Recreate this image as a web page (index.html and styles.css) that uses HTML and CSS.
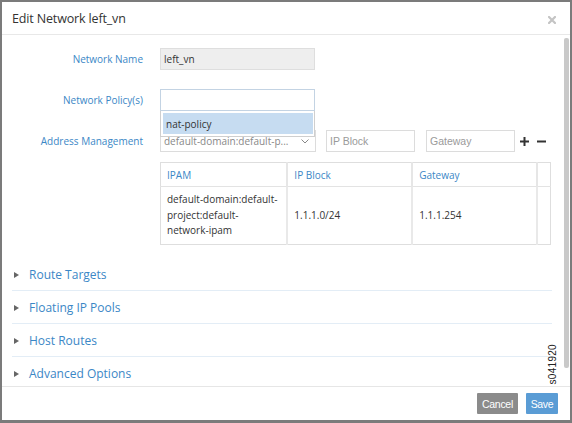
FILE: index.html
```html
<!DOCTYPE html>
<html>
<head>
<meta charset="utf-8">
<link rel="stylesheet" href="styles.css">
</head>
<body>
<div class="modal">
  <div class="modal-header">
    <h1 class="title">Edit Network left_vn</h1>
    <span class="close"><svg width="8" height="8" viewBox="0 0 8 8"><path d="M1 1L7 7M7 1L1 7" stroke="#c4c4c4" stroke-width="2.2" stroke-linecap="square"/></svg></span>
  </div>
  <div class="modal-body">
    <div class="form">
      <div class="row">
        <div class="label">Network Name</div>
        <div class="field"><div class="input readonly">left_vn</div></div>
      </div>
      <div class="row">
        <div class="label">Network Policy(s)</div>
        <div class="field policy">
          <div class="input focused"></div>
          <div class="dropdown"><div class="opt active">nat-policy</div></div>
        </div>
      </div>
      <div class="row">
        <div class="label">Address Management</div>
        <div class="field addr">
          <div class="input select"><span class="sel-text">default-domain:default-p...</span><svg class="chev" width="8" height="5" viewBox="0 0 8 5"><path d="M0.5 0.5L4 4L7.5 0.5" fill="none" stroke="#888" stroke-width="1"/></svg></div>
          <div class="input ph ip">IP Block</div>
          <div class="input ph gw">Gateway</div>
          <span class="pm plus"><svg width="9" height="9" viewBox="0 0 9 9"><path d="M4.5 0V9M0 4.5H9" stroke="#333" stroke-width="2"/></svg></span>
          <span class="pm minus"><svg width="9" height="9" viewBox="0 0 9 9"><path d="M0 4.5H9" stroke="#333" stroke-width="2"/></svg></span>
        </div>
      </div>
    </div>
    <table class="ipam">
      <thead>
        <tr><th class="c1">IPAM</th><th class="c2">IP Block</th><th class="c3">Gateway</th><th class="c4"></th></tr>
      </thead>
      <tbody>
        <tr><td>default-domain:default-<br>project:default-<br>network-ipam</td><td>1.1.1.0/24</td><td>1.1.1.254</td><td></td></tr>
      </tbody>
    </table>
    <div class="sections">
      <div class="section"><span class="tri"></span>Route Targets</div>
      <div class="section"><span class="tri"></span>Floating IP Pools</div>
      <div class="section"><span class="tri"></span>Host Routes</div>
      <div class="section"><span class="tri"></span>Advanced Options</div>
    </div>
    <div class="scrollbar"></div>
    <div class="fig-id">s041920</div>
  </div>
  <div class="modal-footer">
    <button class="btn cancel">Cancel</button>
    <button class="btn save">Save</button>
  </div>
</div>
</body>
</html>
```
FILE: styles.css
```css
* { box-sizing: border-box; }
html, body { margin: 0; padding: 0; }
body {
  width: 572px;
  height: 423px;
  background: #7b7b7b;
  font-family: "Open Sans", "DejaVu Sans", sans-serif;
  overflow: hidden;
}
.modal {
  margin: 2px 2px 0 2px;
  width: 568px;
  height: 418px;
  background: #fff;
  display: flex;
  flex-direction: column;
  position: relative;
}
.modal-header {
  height: 33px;
  border-bottom: 1px solid #e8e8e8;
  display: flex;
  align-items: center;
  justify-content: space-between;
  padding: 0 14px 0 10px;
  flex: none;
}
.title {
  margin: 0;
  font-size: 12.5px;
  font-weight: 400;
  color: #333;
  letter-spacing: -0.15px;
}
.close { display: flex; margin-top: 4px; }
.modal-body {
  height: 351px;
  flex: none;
  position: relative;
  overflow: hidden;
  padding-top: 13px;
}
.form { display: flex; flex-direction: column; gap: 19px; }
.row { display: flex; align-items: center; height: 22px; }
.label {
  width: 141px;
  text-align: right;
  font-size: 10px;
  color: #3b87c6;
  flex: none;
  margin-right: 17px;
}
.field { display: flex; align-items: center; position: relative; }
.input {
  height: 22px;
  border: 1px solid #dcdcdc;
  background: #fff;
  font-size: 10px;
  color: #333;
  display: flex;
  align-items: center;
  padding: 0 3px;
}
.readonly { width: 155px; background: #eeeeee; border-color: #dedede; }
.focused { width: 155px; border-color: #c3d3e3; }
.dropdown {
  position: absolute;
  left: 0;
  top: 22px;
  width: 155px;
  height: 26px;
  background: #fff;
  border: 1px solid #cfcfcf;
  border-top: none;
  padding: 2px 1px 2px 2px;
  z-index: 2;
}
.opt {
  height: 21px;
  background: #c6dcf1;
  font-size: 10px;
  color: #333;
  display: flex;
  align-items: center;
  padding-left: 3px;
}
.select { width: 156px; justify-content: space-between; color: #888; padding-right: 6px; }
.sel-text { white-space: nowrap; }
.ph {
  font-family: "Liberation Sans", Arial, sans-serif;
  font-size: 10.5px;
  color: #9a9a9a;
}
.ip { width: 89px; margin-left: 10px; }
.gw { width: 89px; margin-left: 11px; }
.pm { display: flex; }
.plus { margin-left: 5px; }
.minus { margin-left: 8px; }
.ipam {
  margin: 10px 0 0 158px;
  border-collapse: collapse;
  width: 391px;
  font-size: 10px;
  border: 1px solid #dedede;
}
.ipam th {
  height: 24px;
  text-align: left;
  font-weight: 400;
  color: #3b87c6;
  padding: 0 6px;
  border-right: 2px solid #e6e6e6;
  border-bottom: 1px solid #e3e3e3;
}
.ipam .c1 { width: 127px; }
.ipam .c2 { width: 127px; }
.ipam .c3 { width: 127px; }
.ipam .c4 { width: 10px; border-right: none; }
.ipam td {
  height: 58px;
  color: #333;
  padding: 0 4px 0 6px;
  line-height: 15.5px;
  border-right: 2px solid #e9e9e9;
  vertical-align: middle;
  white-space: nowrap;
}
.ipam td:last-child { border-right: none; }
.sections { margin: 13px 18px 0 10px; }
.section {
  height: 33px;
  border-bottom: 1px solid #e3edf6;
  display: flex;
  align-items: center;
  font-size: 12px;
  color: #3b87c6;
  padding-top: 1px;
}
.tri {
  width: 0;
  height: 0;
  border-top: 3.5px solid transparent;
  border-bottom: 3.5px solid transparent;
  border-left: 5px solid #666;
  margin: 0 10px 0 2px;
}
.scrollbar {
  position: absolute;
  right: 1px;
  top: 3px;
  width: 5px;
  height: 330px;
  background: #c9c9c9;
  border-radius: 2px;
}
.fig-id {
  position: absolute;
  right: 12px;
  bottom: 2px;
  writing-mode: vertical-rl;
  transform: rotate(180deg);
  font-family: "Liberation Sans", Arial, sans-serif;
  font-size: 10px;
  color: #222;
  letter-spacing: 0.3px;
}
.modal-footer {
  flex: none;
  height: 34px;
  border-top: 1px solid #e6e6e6;
  display: flex;
  align-items: center;
  justify-content: flex-end;
  gap: 8px;
  padding-right: 12px;
}
.btn {
  height: 21px;
  border: none;
  border-radius: 1px;
  font-family: "Liberation Sans", Arial, sans-serif;
  font-size: 10.5px;
  color: #fff;
  padding: 0;
  letter-spacing: -0.3px;
}
.cancel { width: 41px; background: #8b8b8b; }
.save { width: 32px; background: #5a9cd5; }
```
